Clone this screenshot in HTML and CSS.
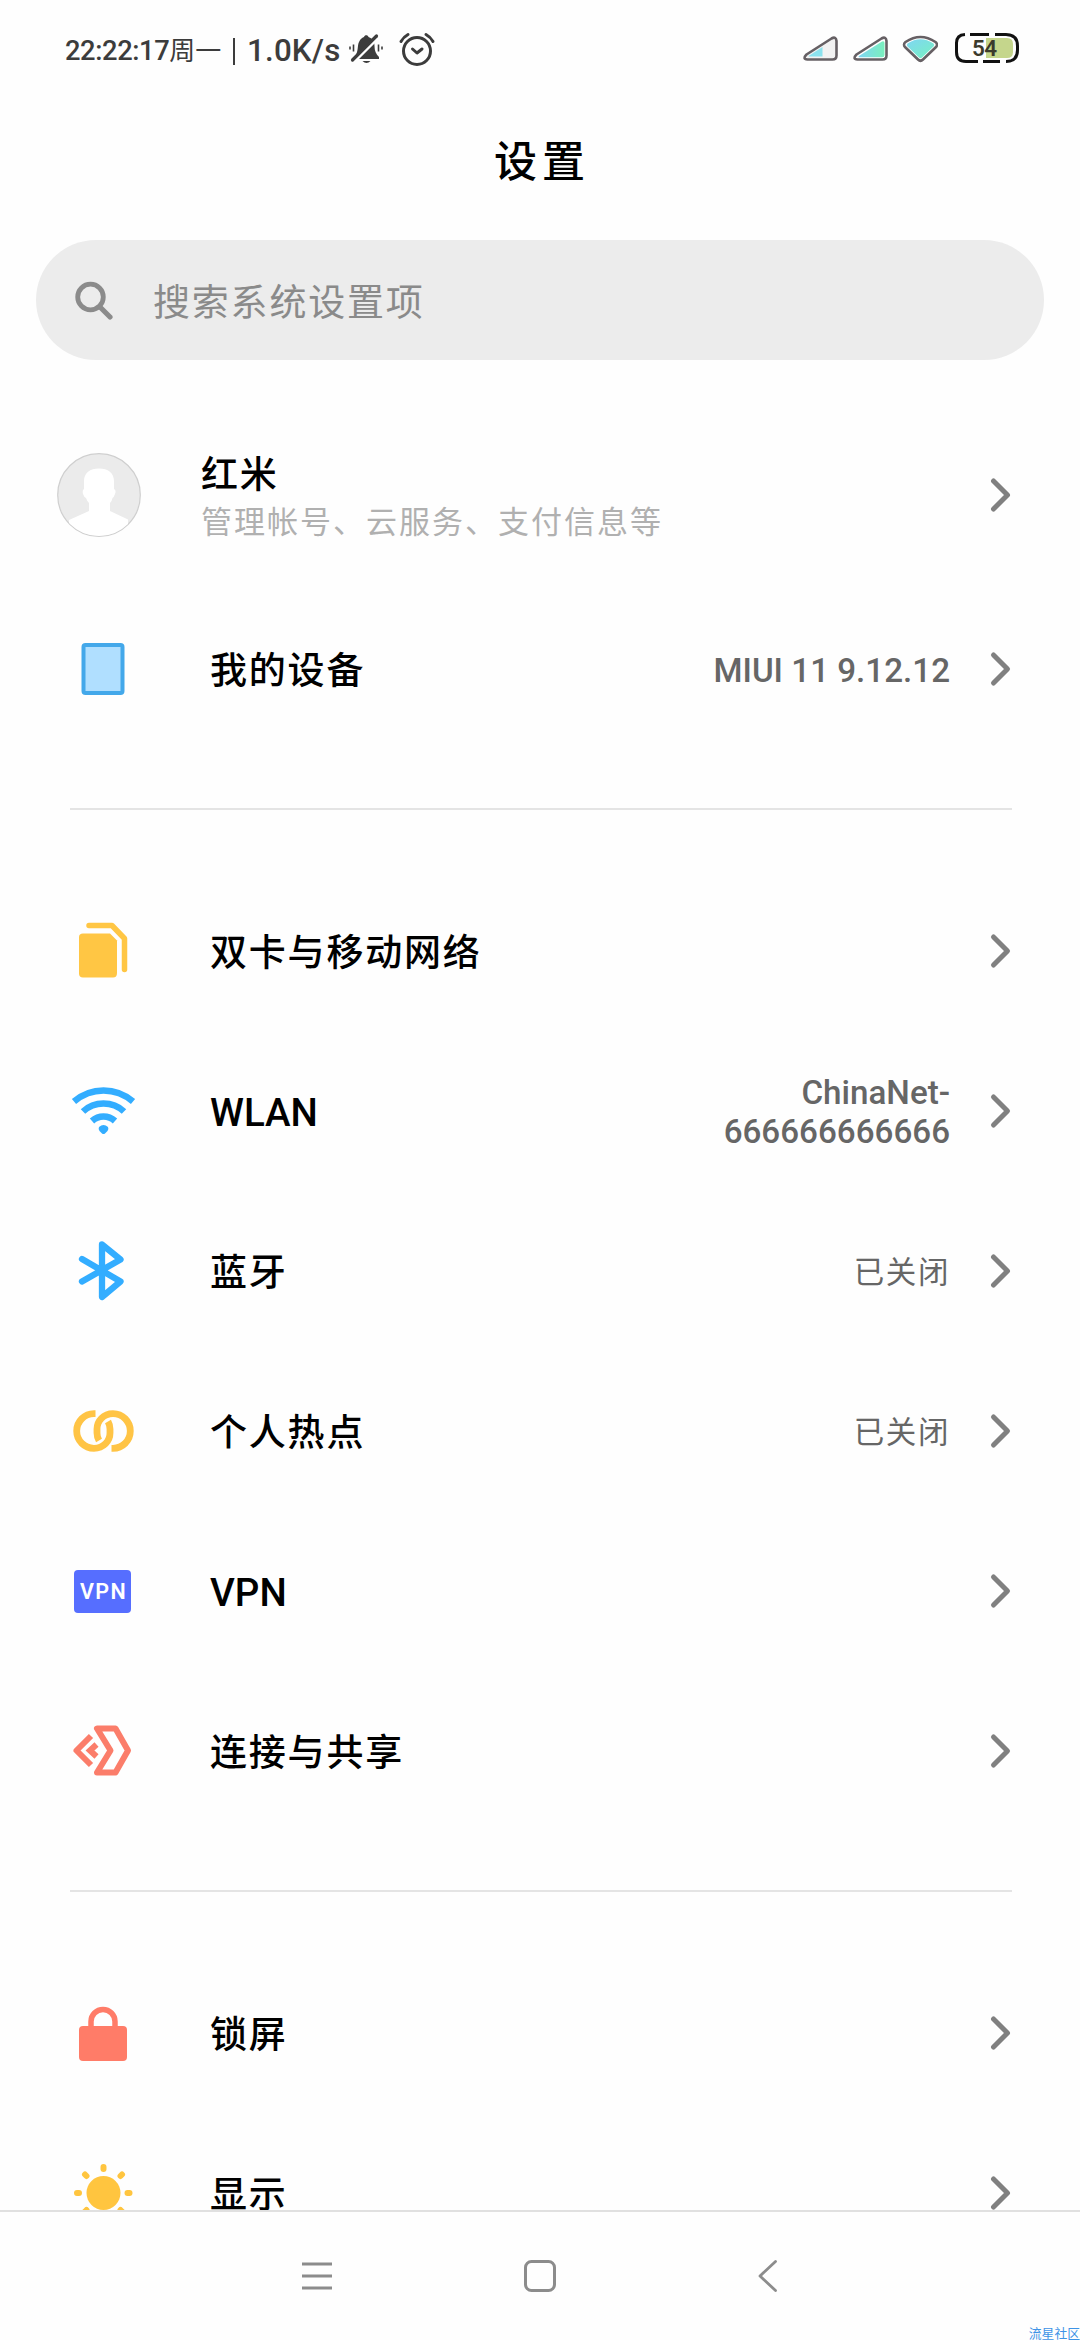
FILE: index.html
```html
<!DOCTYPE html>
<html lang="zh-CN">
<head>
<meta charset="utf-8">
<title>设置</title>
<link rel="stylesheet" href="styles.css">
</head>
<body>
<svg width="0" height="0" class="defs">
  <symbol id="chevron" viewBox="0 0 24 40"><path d="M5.500 6 L19.500 20 L5.500 34" fill="none" stroke="#808080" stroke-width="5" stroke-linecap="round" stroke-linejoin="round"/></symbol>
</svg>
<div class="screen">
  <header class="status">
    <span class="clock">22:22:17<span class="day">周一</span></span>
    <span class="bar"></span>
    <span class="speed">1.0K/s</span>
    <svg class="bell" width="36" height="36" viewBox="0 0 36 36">
      <path d="M6 26 C11 20 9 14 11 10 C12.500 6.500 14.500 5.500 16 5 C16.500 2.500 20 2.500 20.500 5 C25 6.500 26.500 10 26.500 14 C26.500 19 28 22 31 25 V27 H6 Z M14.500 29 H22.500 Q18.500 33 14.500 29 Z" fill="#3c3c3c"/>
      <path d="M5.500 30.500 L30.500 5.500" stroke="#fefefe" stroke-width="3"/>
      <path d="M3.500 24.500 L8 20 V26 Z" fill="#fefefe"/>
      <path d="M4.500 28 L28.500 4" stroke="#3c3c3c" stroke-width="3.200" stroke-linecap="round"/>
      <path d="M2 14.500 V17.500 M5.500 12.500 V19.500 M30.500 12.500 V19.500 M34 14.500 V17.500" stroke="#3c3c3c" stroke-width="1.600"/>
    </svg>
    <svg class="alarm" width="38" height="38" viewBox="0 0 38 38" fill="none" stroke="#3c3c3c" stroke-width="3" stroke-linecap="round" stroke-linejoin="round">
      <circle cx="19" cy="21" r="13.500"/><path d="M14.500 19 L19 23 L24 19 M3 11.500 Q5.500 7 10 4.500 M28 4.500 Q32.500 7 35 11.500"/>
    </svg>
    <span class="grow"></span>
    <svg class="signals" width="136" height="32" viewBox="0 0 136 32">
      <defs><linearGradient id="g"><stop offset="0" stop-color="#7fd6f3"/><stop offset="1" stop-color="#7af0bd"/></linearGradient>
      <linearGradient id="w" x1="0" y1="0" x2=".8" y2="1"><stop offset="0" stop-color="#7fd6f3"/><stop offset="1" stop-color="#78efc5"/></linearGradient></defs>
      <path d="M4.500 21.500 L29.500 5.500 Q34 3 34.500 8 V22.500 Q34.500 26.500 30.500 26.500 H5.500 Q0 26 4.500 21.500 Z" fill="#f2f2f2" stroke="#666064" stroke-width="2.600"/>
      <path d="M6.500 23 L20.500 14 V23.500 H7 Z" fill="#8be2ee"/>
      <path d="M54.500 21.500 L79.500 5.500 Q84 3 84.500 8 V22.500 Q84.500 26.500 80.500 26.500 H55.500 Q50 26 54.500 21.500 Z" fill="#fff" stroke="#666064" stroke-width="2.600"/>
      <path d="M56.500 23.200 L80 8.500 Q82.500 7.500 82.500 10 V22 Q82.500 24.200 80 24.200 H57 Z" fill="url(#g)"/>
      <path d="M103.500 9 Q118.500 -1 133.500 9 Q136.500 11.500 133.500 14.500 L121 26.500 Q118.500 29 116 26.500 L103.500 14.500 Q100.500 11.500 103.500 9 Z" fill="#fff" stroke="#666064" stroke-width="2.600"/>
      <path d="M105.500 10.500 Q118.500 2 131.500 10.500 Q133 12 131.500 13.500 L120 24.500 Q118.500 26 117 24.500 L105.500 13.500 Q104 12 105.500 10.500 Z" fill="url(#w)"/>
    </svg>
    <svg class="battery" width="66" height="32" viewBox="0 0 66 32">
      <path d="M32 6 H53 Q59 6 59 12 V20 Q59 26 53 26 H32 Z" fill="#c5d68c"/>
      <path d="M11 2.500 Q2.500 3 2.500 11 V20 Q2.500 29.500 12 29.500 H24 M16 2.500 H35 M41 2.500 H52 Q63.500 2.500 63.500 14 V18 Q63.500 29.500 52 29.500 M29 29.500 H46" fill="none" stroke="#111" stroke-width="3"/>
      <text x="18" y="24" class="charge">54</text>
    </svg>
  </header>

  <h1 class="title">设置</h1>
  <div class="search">
    <svg width="40" height="40" viewBox="0 0 40 40" fill="none" stroke="#8b8b8b"><circle cx="16.500" cy="17" r="12.800" stroke-width="4.800"/><path d="M26 27 L36 37" stroke-width="5.200" stroke-linecap="round"/></svg>
    <span>搜索系统设置项</span>
  </div>

  <main class="list">
    <div class="profile">
      <svg width="84" height="84" viewBox="0 0 84 84"><defs><clipPath id="c"><circle cx="42" cy="42" r="41"/></clipPath></defs>
        <circle cx="42" cy="42" r="41.300" fill="#ebebeb" stroke="#cfcfcf" stroke-width="1.200"/>
        <path clip-path="url(#c)" d="M42 15.500 C51 15.500 57 20 57 28 V36 Q59.500 37 58 41 Q57 44 55.500 45 Q55 48 53 50 V58 L71 66.500 V84 H12 V67 L32 58 V50 Q30 48 29 45 Q27 44 26 41 Q25 37 27 36 V28 C27 20 33 15.500 42 15.500 Z" fill="#fff"/>
      </svg>
      <div class="who"><div class="name">红米</div><div class="about">管理帐号、云服务、支付信息等</div></div>
      <svg class="chev"><use href="#chevron"/></svg>
    </div>
    <div class="row">
      <svg class="icon" viewBox="0 0 64 64"><rect x="14.500" y="8" width="39" height="48" rx="2" fill="#b0dfff" stroke="#43a8ea" stroke-width="4"/></svg>
      <span class="label">我的设备</span><span class="value latin">MIUI 11 9.12.12</span><svg class="chev"><use href="#chevron"/></svg>
    </div>
    <hr>
    <div class="row">
      <svg class="icon" viewBox="0 0 64 64"><path d="M14 14.500 H41 L48 21.500 V54 Q48 58.500 44 58.500 H14 Q10 58.500 10 54.500 V18 Q10 14.500 14 14.500 Z" fill="#ffc644"/><path d="M20 6.500 H43 L55.500 19.500 V50.500" fill="none" stroke="#ffc644" stroke-width="5.500" stroke-linecap="round" stroke-linejoin="round"/></svg>
      <span class="label">双卡与移动网络</span><svg class="chev"><use href="#chevron"/></svg>
    </div>
    <div class="row">
      <svg class="icon" viewBox="0 0 64 64"><g fill="none" stroke="#33adff" stroke-width="6.500" stroke-linejoin="round"><path d="M5 22.500 Q18 11.500 34.500 11.500 Q51 11.500 64 22.500"/><path d="M14 32.500 Q22.500 24.500 34.500 24.500 Q46.500 24.500 55 32.500"/><path d="M23 42 Q28 37.500 34.500 37.500 Q41 37.500 46 42"/></g><path d="M30 48 Q34.500 44 39 48 Q40 50 38.500 52 L36 54.500 Q34.500 55.500 33 54.500 L30.500 52 Q29 50 30 48Z" fill="#33adff"/></svg>
      <span class="label en">WLAN</span><span class="value latin">ChinaNet-<br>666666666666</span><svg class="chev"><use href="#chevron"/></svg>
    </div>
    <div class="row">
      <svg class="icon" viewBox="0 0 64 64"><path d="M13 20 L51.500 42.500 L33 58 V5.500 L51.500 20.500 L13 42.500" fill="none" stroke="#33adff" stroke-width="6.300" stroke-linecap="round" stroke-linejoin="round"/></svg>
      <span class="label">蓝牙</span><span class="value">已关闭</span><svg class="chev"><use href="#chevron"/></svg>
    </div>
    <div class="row">
      <svg class="icon" viewBox="0 0 64 64" fill="none" stroke="#ffc445" stroke-width="6.800"><path d="M26.500 14.700 H25 A17.300 17.300 0 0 0 25 49.300 C34.500 49.300 41 42 41 34 V30 Q41 26 39 22.500"/><path d="M42.500 49.300 H44 A17.300 17.300 0 0 0 44 14.700 C34.500 14.700 28 22 28 30 V34 Q28 38 30 41.500"/></svg>
      <span class="label">个人热点</span><span class="value">已关闭</span><svg class="chev"><use href="#chevron"/></svg>
    </div>
    <div class="row">
      <span class="icon vpn">VPN</span>
      <span class="label en">VPN</span><svg class="chev"><use href="#chevron"/></svg>
    </div>
    <div class="row">
      <svg class="icon" viewBox="0 0 64 64" fill="none" stroke="#fb7d6a" stroke-width="6" stroke-linejoin="round"><path d="M28 9.500 H46.500 L59 31.500 L46.500 53.500 H28 L41.500 31.500 Z"/><path d="M22 17 L7.500 31.500 L22 46"/><path d="M27.500 25.500 L21 31.500 L27.500 37.500" stroke-width="6" stroke-linejoin="miter"/></svg>
      <span class="label">连接与共享</span><svg class="chev"><use href="#chevron"/></svg>
    </div>
    <hr>
    <div class="row">
      <svg class="icon" viewBox="0 0 64 64"><rect x="10" y="25" width="48" height="35" rx="4" fill="#ff7c68"/><path d="M22 27 V20.500 A12 12 0 0 1 46 20.500 V27" fill="none" stroke="#ff7c68" stroke-width="5.500"/></svg>
      <span class="label">锁屏</span><svg class="chev"><use href="#chevron"/></svg>
    </div>
    <div class="row">
      <svg class="icon" viewBox="0 0 64 64"><circle cx="34.500" cy="32" r="17" fill="#ffc53f"/><path d="M34.500 6 V8 M34.500 56.500 V58 M8 32 H10 M58.500 32 H60.500 M16 13.500 L17.500 15 M53 13.500 L51.500 15 M16 50.500 L17.500 49 M53 50.500 L51.500 49" stroke="#ffc53f" stroke-width="6" stroke-linecap="round"/></svg>
      <span class="label">显示</span><svg class="chev"><use href="#chevron"/></svg>
    </div>
  </main>

  <nav class="nav">
    <svg width="40" height="40" viewBox="0 0 40 40"><path d="M5 8 H35 M5 20 H35 M5 32 H35" stroke="#8c8c8c" stroke-width="3"/></svg>
    <svg width="40" height="40" viewBox="0 0 40 40"><rect x="5.500" y="5.500" width="29" height="29" rx="6" fill="none" stroke="#8c8c8c" stroke-width="3"/></svg>
    <svg width="40" height="40" viewBox="0 0 40 40"><path d="M28.500 5.500 L13 20 L28.500 34.500" fill="none" stroke="#8c8c8c" stroke-width="2.800" stroke-linecap="round" stroke-linejoin="round"/></svg>
  </nav>
  <span class="mark">流星社区</span>
</div>
</body>
</html>
```
FILE: styles.css
```css
* { box-sizing: border-box; }
body {
  margin: 0;
  background: #fefefe;
  color: #000;
  font-family: Roboto, "Noto Sans CJK SC", sans-serif;
}
.defs { position: absolute; }
.screen {
  position: relative;
  display: flex;
  flex-direction: column;
  width: 1080px;
  height: 2340px;
  overflow: hidden;
}
.status {
  display: flex;
  align-items: center;
  height: 100px;
  padding: 0 60px 0 65px;
  color: #3c3c3c;
  white-space: nowrap;
}
.clock { width: 166px; padding-top: 2px; font-size: 27.300px; line-height: 40px; font-weight: 500; letter-spacing: -.4px; }
.day { font-size: 26px; font-weight: 400; letter-spacing: 0; }
.bar { width: 2.500px; height: 27px; margin-left: 1.500px; background: #3c3c3c; margin-top: 3px; }
.speed { width: 101px; margin-left: 12px; padding-top: 2px; font-size: 31.300px; line-height: 40px; font-weight: 500; letter-spacing: .2px; }
.bell { margin-top: -1px; }
.alarm { margin-left: 14px; margin-top: -2px; }
.grow { flex: 1; }
.signals { margin-top: -3px; }
.battery { margin-left: 16px; margin-top: -4px; }
.charge { font-size: 22.500px; font-weight: 600; letter-spacing: -.6px; fill: #3b3a2c; }
.title {
  margin: 0;
  height: 140px;
  padding: 36px 0 0 4px;
  font-size: 43px;
  line-height: 52px;
  font-weight: 500;
  letter-spacing: 5px;
  text-align: center;
}
.search {
  display: flex;
  align-items: center;
  gap: 39px;
  flex: none;
  height: 120px;
  margin: 0 36px;
  padding: 0 0 1px 38px;
  border-radius: 60px;
  background: #ececec;
  color: #8a8a8a;
  font-size: 37px;
  letter-spacing: 1.800px;
}
.list { flex: none; height: 1850px; padding: 64px 68px 0 69px; overflow: hidden; }
.profile { display: flex; align-items: center; height: 141px; margin: 0 0 24px -12px; }
.who { flex: 1; margin-left: 60px; padding-top: 7px; }
.name { font-size: 37px; line-height: 46px; font-weight: 500; letter-spacing: 1.800px; }
.about { margin-top: 3px; font-size: 31px; line-height: 42px; letter-spacing: 2px; color: #b0b0b0; }
.row { display: flex; align-items: center; height: 160px; }
.icon { flex: none; width: 64px; height: 64px; overflow: visible; }
.vpn {
  width: 57px;
  height: 43px;
  margin: 0 2px 0 5px;
  padding-left: 2px;
  border-radius: 4px;
  background: #566eff;
  color: #fff;
  font-size: 21.500px;
  line-height: 44px;
  font-weight: 600;
  letter-spacing: 1.300px;
  text-align: center;
}
.label { flex: 1; margin-left: 77px; padding-top: 5px; font-size: 37px; line-height: 56px; font-weight: 500; letter-spacing: 1.800px; }
.en { padding-top: 3px; font-size: 38.500px; letter-spacing: 0; }
.value { color: #666; font-size: 30.500px; letter-spacing: 1.600px; text-align: right; padding-bottom: 2px; }
.latin { font-size: 33.200px; line-height: 38.700px; font-weight: 500; letter-spacing: 0; padding: 4px 0 0; }
.chev { flex: none; width: 24px; height: 40px; margin-left: 38px; }
hr { height: 1.500px; margin: 59px 0 61.500px 1px; border: 0; background: #e4e4e4; }
.nav {
  display: flex;
  gap: 185px;
  height: 130px;
  flex: none;
  padding: 44px 0 0 297px;
  border-top: 2px solid #e0e0e0;
  background: #fefefe;
}
.nav svg:nth-child(2) { margin: 0 2px 0 -2px; }
.mark { position: absolute; right: 0; bottom: -4px; font-size: 12.800px; line-height: 20px; color: #3d93e6; }
```
